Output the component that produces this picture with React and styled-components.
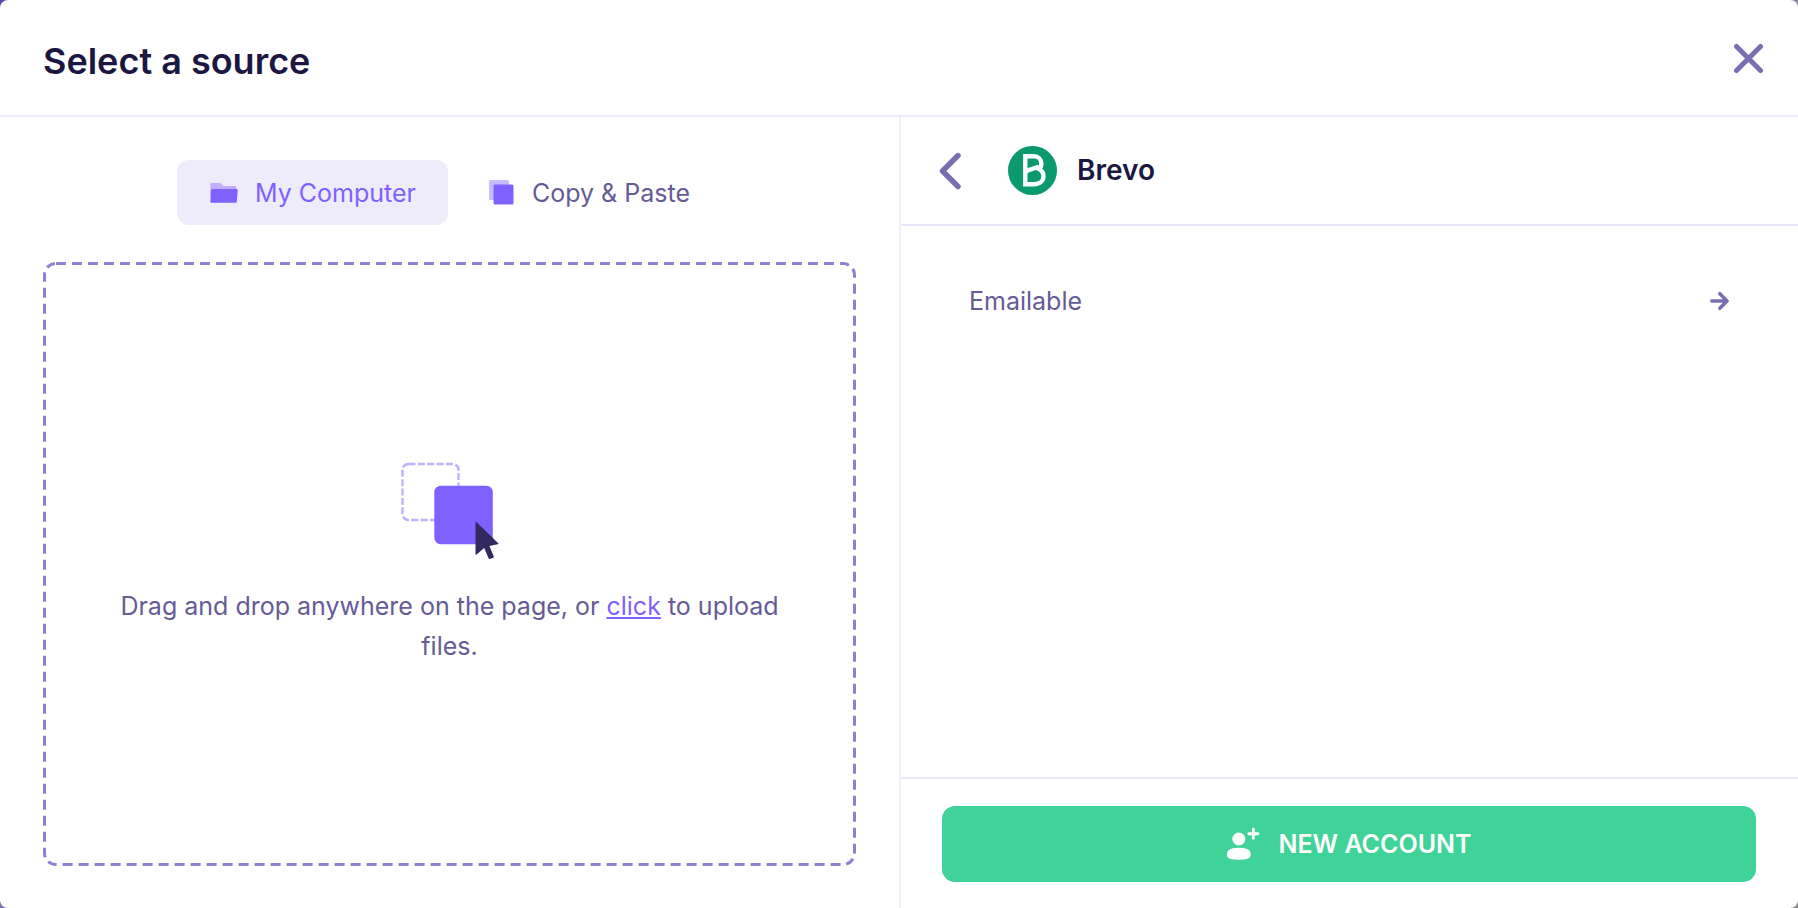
import styled, { createGlobalStyle } from "styled-components"

const GlobalStyle = createGlobalStyle`
    *, *::before, *::after{
        box-sizing: border-box;
    }
    body{
        margin: 0;
        font-family: Inter, 'Liberation Sans', sans-serif;
        font-size: 25px;
        color: #655b97;
        background: linear-gradient(135deg, #5a45b8 0, #5a45b8 40px, #908aa8 50%, #8f8f92 100%);
    }
    button{
        font: inherit;
        color: inherit;
        background: none;
        border: 0;
        padding: 0;
        cursor: pointer;
    }
    svg{
        display: block;
        flex: none;
    }
`;

const Modal = styled.div`
    display: flex;
    flex-direction: column;
    min-height: 100vh;
    background-color: #fff;
    border-radius: 8px;
`;

const ModalHeader = styled.header`
    display: flex;
    align-items: flex-start;
    justify-content: space-between;
    padding: 36px 34px 29px 43px;
    border-bottom: 2px solid #edebf9;
`;

const ModalTitle = styled.h1`
    margin: 0;
    font-size: 36px;
    line-height: 50px;
    font-weight: 600;
    color: #1c1642;
`;

const CloseButton = styled.button`
    && {
        padding: 7px 0;
    }
`;

const ModalBody = styled.div`
    flex: 1;
    display: grid;
    grid-template-columns: 1fr 1fr;
`;

const UploadPanel = styled.section`
    display: flex;
    flex-direction: column;
    gap: 37px;
    padding: 43px 43px 42px;
`;

const Tabs = styled.div`
    display: flex;
    justify-content: center;
    gap: 8px;
`;

const Tab = styled.button`
    display: flex;
    align-items: center;
    gap: 16px;
    line-height: 40px;
    border-radius: 12px;
    && {
        padding: 13px 32px 12px;
        color: ${props => props.$active ? '#7f61ff' : '#655b97'};
        background-color: ${props => props.$active ? '#eeecfb' : 'transparent'};
    }
`;

const dashes = encodeURIComponent(
    "<svg xmlns='http://www.w3.org/2000/svg' width='100%' height='100%'><rect width='100%' height='100%' fill='none' rx='13' ry='13' stroke='#8f80d6' stroke-width='6' stroke-dasharray='10 6'/></svg>"
).replace(/'/g, '%27');

const DropZone = styled.div`
    flex: 1;
    display: flex;
    flex-direction: column;
    align-items: center;
    justify-content: center;
    gap: 24px;
    padding: 32px 64px;
    border-radius: 13px;
    background-image: url("data:image/svg+xml,${dashes}");
`;

const DropText = styled.p`
    margin: 0;
    line-height: 40px;
    text-align: center;
`;

const ClickLink = styled.a`
    color: #7f61ff;
    text-decoration: underline;
`;

const SourcePanel = styled.section`
    display: flex;
    flex-direction: column;
    border-left: 2px solid #f0eefb;
`;

const SourceHeader = styled.div`
    display: flex;
    align-items: center;
    padding: 29px 38px;
    border-bottom: 2px solid #e9e6f9;
`;

const SourceName = styled.h2`
    margin: 0 0 0 20px;
    font-size: 28px;
    line-height: 49px;
    font-weight: 600;
    color: #1c1642;
`;

const BackButton = styled.button`
    margin-right: 45px;
`;

const AccountList = styled.ul`
    flex: 1;
    list-style: none;
    margin: 0;
    padding: 43px 42px;
`;

const AccountRow = styled.button`
    display: flex;
    align-items: center;
    justify-content: space-between;
    width: 100%;
    line-height: 40px;
    && {
        padding: 12px 26px;
    }
`;

const SourceFooter = styled.footer`
    padding: 27px 42px 26px 41px;
    border-top: 2px solid #e9e6f9;
`;

const NewAccountButton = styled.button`
    display: flex;
    align-items: center;
    justify-content: center;
    gap: 18px;
    width: 100%;
    height: 76px;
    border-radius: 13px;
    && {
        color: #fff;
        font-weight: 600;
        background-color: #40d399;
    }
`;

const CloseIcon = () => (
    <svg width="31" height="31" viewBox="0 0 31 31" fill="none" stroke="#7a6db0" strokeWidth="5" strokeLinecap="round" aria-hidden="true">
        <path d="M3.500 3.500l24 24M27.500 3.500l-24 24" />
    </svg>
)

const BackIcon = () => (
    <svg width="24" height="38" viewBox="0 0 24 38" fill="none" stroke="#7a6db0" strokeWidth="5.400" strokeLinecap="round" strokeLinejoin="round" aria-hidden="true">
        <path d="M19 3.500L3.500 19 19 34.500" />
    </svg>
)

const ArrowIcon = () => (
    <svg width="20" height="20" viewBox="0 0 20 20" fill="none" stroke="#7a6db0" strokeWidth="3.500" strokeLinecap="round" strokeLinejoin="round" aria-hidden="true">
        <path d="M1.800 10h15M9.800 2.700l7.300 7.300-7.300 7.300" />
    </svg>
)

const FolderIcon = () => (
    <svg width="30" height="24" viewBox="0 0 30 24" aria-hidden="true">
        <path d="M1.300 3a1 1 0 0 1 1-1h8.500q.6 0 1.100.4l2 2.100q.4.500 1.100.5H26q1.200 0 1.300 1.300V15H1.300z" fill="#bdaeff" />
        <path d="M3.300 8H27.500q1.300 0 1.200 1.200l-.9 11.500q-.1 1.100-1.300 1.100H2.500q-1.200 0-1.100-1.200L2 9.200Q2.100 8 3.300 8z" fill="#7f61ff" />
    </svg>
)

const CopyIcon = () => (
    <svg width="28" height="28" viewBox="0 0 28 28" aria-hidden="true">
        <rect x="1" y="1" width="20" height="20" rx="1.500" fill="#c8bcff" />
        <rect x="5.500" y="5.500" width="20" height="20" rx="1.500" fill="#7f61ff" />
    </svg>
)

const DragIcon = () => (
    <svg width="100" height="100" viewBox="0 1 100 100" aria-hidden="true">
        <rect x="2.500" y="3" width="56" height="56" rx="6" fill="none" stroke="#c0b1ff" strokeWidth="2.400" strokeDasharray="7 2.370" />
        <rect x="34.300" y="24.700" width="58.500" height="58.500" rx="6.500" fill="#7f61ff" />
        <path d="M75.500 61.700q0-1.600 1.200-.5L98.200 82.300q.8.900-.4 1L89.400 84.900 93.800 95.500q.3.900-.5 1.200l-3.400 1.400q-.8.300-1.200-.5L84.200 87 76.600 93.500q-1.100.8-1.100-.5z" fill="#31295f" />
    </svg>
)

const BrevoLogo = () => (
    <svg width="49" height="49" viewBox="0 0 49 49" role="img" aria-label="Brevo logo">
        <circle cx="24.500" cy="24.500" r="24.500" fill="#0b996e" />
        <path d="M17.300 10.300V38.200H26C32 38.200 35.500 34.800 35.500 30.300 35.500 27 34 24.500 31 23 32.800 21.600 33.300 20 33.300 17.800 33.300 13 30.200 10.300 26 10.300zM17.300 27.500C17.300 22.500 29.500 23.300 31 19.500" fill="none" stroke="#fff" strokeWidth="4.400" />
    </svg>
)

const AddUserIcon = () => (
    <svg width="34" height="34" viewBox="0 0 34 34" fill="#fff" aria-hidden="true">
        <circle cx="12.800" cy="12" r="6.500" />
        <path d="M1 26.500Q1 20.800 12.800 20.800T24.600 26.500V28.500Q24.600 32.800 12.800 32.800T1 28.500z" />
        <path d="M27.300 2.200v9M22.800 6.700h9" stroke="#fff" strokeWidth="2.900" strokeLinecap="round" />
    </svg>
)

const accounts = ['Emailable']

export default function App() {
    return (
        <>
            <GlobalStyle />
            <Modal role="dialog" aria-labelledby="modal-title">
                <ModalHeader>
                    <ModalTitle id="modal-title">Select a source</ModalTitle>
                    <CloseButton type="button" aria-label="Close"><CloseIcon /></CloseButton>
                </ModalHeader>
                <ModalBody>
                    <UploadPanel>
                        <Tabs role="tablist">
                            <Tab type="button" role="tab" aria-selected="true" $active>
                                <FolderIcon />
                                My Computer
                            </Tab>
                            <Tab type="button" role="tab" aria-selected="false">
                                <CopyIcon />
                                Copy &amp; Paste
                            </Tab>
                        </Tabs>
                        <DropZone>
                            <DragIcon />
                            <DropText>
                                Drag and drop anywhere on the page, or <ClickLink href="#upload">click</ClickLink> to upload files.
                            </DropText>
                        </DropZone>
                    </UploadPanel>
                    <SourcePanel>
                        <SourceHeader>
                            <BackButton type="button" aria-label="Back"><BackIcon /></BackButton>
                            <BrevoLogo />
                            <SourceName>Brevo</SourceName>
                        </SourceHeader>
                        <AccountList>
                            {accounts.map(account => (
                                <li key={account}>
                                    <AccountRow type="button">
                                        {account}
                                        <ArrowIcon />
                                    </AccountRow>
                                </li>
                            ))}
                        </AccountList>
                        <SourceFooter>
                            <NewAccountButton type="button">
                                <AddUserIcon />
                                NEW ACCOUNT
                            </NewAccountButton>
                        </SourceFooter>
                    </SourcePanel>
                </ModalBody>
            </Modal>
        </>
    )
}
